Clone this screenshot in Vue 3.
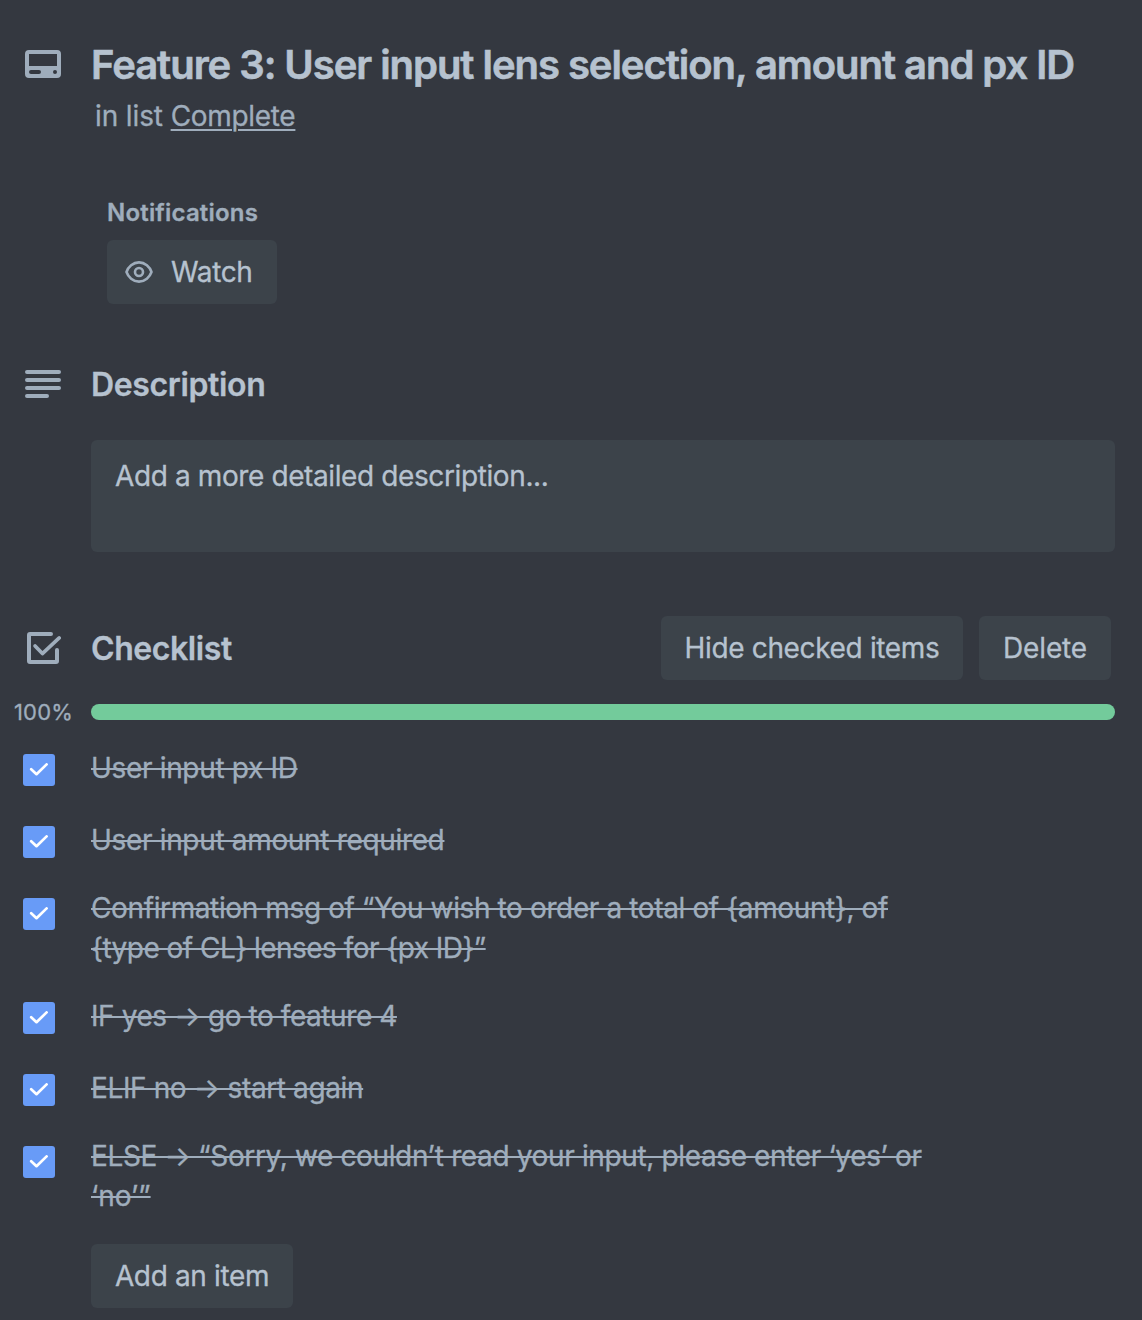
<script setup>
const items = [
  { lines: [{ text: 'User input px ID', spacing: '-0.33px' }] },
  { lines: [{ text: 'User input amount required', spacing: '-0.33px' }] },
  {
    lines: [
      { text: 'Confirmation msg of “You wish to order a total of {amount}, of', spacing: '-0.38px' },
      { text: '{type of CL} lenses for {px ID}”', spacing: '-0.53px' },
    ],
  },
  { lines: [{ text: 'IF yes → go to feature 4', spacing: '-0.42px' }] },
  { lines: [{ text: 'ELIF no → start again', spacing: '-0.38px' }] },
  {
    lines: [
      { text: 'ELSE → “Sorry, we couldn’t read your input, please enter ‘yes’ or', spacing: '-0.365px' },
      { text: '‘no’”', spacing: '0px' },
    ],
  },
]
</script>

<template>
  <main class="card">
    <header class="row head">
      <svg class="icon head-icon" width="36" height="28" viewBox="0 0 36 28">
        <path fill="currentColor" fill-rule="evenodd" d="M4 0h28a4 4 0 0 1 4 4v20a4 4 0 0 1-4 4H4a4 4 0 0 1-4-4V4a4 4 0 0 1 4-4Zm0 4v12h28V4H4Zm2 16a2 2 0 0 0 0 4h8a2 2 0 0 0 0-4H6Zm24 0a2 2 0 1 0 0 4 2 2 0 0 0 0-4Z" />
      </svg>
      <div>
        <h1><span class="t-title">Feature 3: User input lens selection, amount and px ID</span></h1>
        <p class="sub"><span class="t-sub">in list </span><a class="t-complete">Complete</a></p>
      </div>
    </header>

    <section class="notifications">
      <h3><span class="t-notif">Notifications</span></h3>
      <button class="btn watch">
        <svg width="28" height="22" viewBox="0 0 28 22" fill="none" stroke="currentColor" stroke-width="2.6">
          <path d="M1.5 11C3.2 6 8 1.4 14 1.4S24.800 6 26.500 11C24.800 16 20 20.600 14 20.600S3.200 16 1.500 11Z" stroke-linejoin="round" />
          <circle cx="14" cy="11" r="4" />
        </svg>
        <span class="t-watch">Watch</span>
      </button>
    </section>

    <section class="row description">
      <svg class="icon" width="36" height="28" viewBox="0 0 36 28" stroke="currentColor" stroke-width="4" stroke-linecap="round">
        <path d="M2 2h32M2 10h32M2 18h32M2 26h20" />
      </svg>
      <h2><span class="t-desc">Description</span></h2>
    </section>
    <div class="desc-box"><span class="t-box">Add a more detailed description...</span></div>

    <section class="row checklist">
      <svg class="icon check-icon" width="36" height="32" viewBox="0 0 36 32" fill="none" stroke="currentColor" stroke-width="4" stroke-linecap="round" stroke-linejoin="round">
        <path d="M26 2H5a1 1 0 0 0-1 1v26a1 1 0 0 0 1 1h26a1 1 0 0 0 1-1V18" />
        <path d="M10.100 13.900l7.300 7.700L34.200 5.900" stroke-width="3.600" />
      </svg>
      <h2><span class="t-check">Checklist</span></h2>
      <div class="actions">
        <button class="btn hide"><span class="t-hide">Hide checked items</span></button>
        <button class="btn delete"><span class="t-delete">Delete</span></button>
      </div>
    </section>

    <div class="progress">
      <span class="percent"><span class="t-pct">100%</span></span>
      <div class="track"></div>
    </div>

    <ul class="items">
      <li v-for="(item, i) in items" :key="i">
        <span class="box">
          <svg width="20" height="14" viewBox="0 0 20 14" fill="none" stroke="#fff" stroke-width="2.7" stroke-linecap="round" stroke-linejoin="round">
            <path d="M2.200 6.200 7.500 11.200 17.600 1.400" />
          </svg>
        </span>
        <div class="label">
          <div v-for="line in item.lines" :key="line.text">
            <s :style="{ letterSpacing: line.spacing }">{{ line.text }}</s>
          </div>
        </div>
      </li>
    </ul>

    <button class="btn add"><span class="t-add">Add an item</span></button>
  </main>
</template>

<style>
body {
  background: #343840;
}
</style>

<style scoped>
.card {
  box-sizing: border-box;
  width: 1142px;
  height: 1320px;
  padding: 40px 27px 0 0;
  display: flex;
  flex-direction: column;
  overflow: hidden;
  background: #343840;
  color: #b6c2cf;
  font-family: Inter, "Liberation Sans", sans-serif;
  font-size: 28px;
  line-height: 40px;
  white-space: nowrap;
  -webkit-text-stroke: 0.3px currentColor;
}
h1, h2, h3, p, ul { margin: 0; padding: 0; }
h1 { font-size: 40px; line-height: 50px; font-weight: 600; -webkit-text-stroke-width: 0.6px; }
h2 { font-size: 32px; line-height: 40px; font-weight: 600; padding-top: 2px; }
h3 { font-size: 24px; line-height: 32px; font-weight: 600; color: #9fadbc; padding-top: 1px; }
.t-title { letter-spacing: -1.045px; }
.t-sub { letter-spacing: -0.12px; }
.t-complete { letter-spacing: -0.31px; }
.t-notif { letter-spacing: 0.19px; }
.t-watch { letter-spacing: -0.35px; }
.t-desc { letter-spacing: -0.36px; }
.t-box { letter-spacing: -0.39px; }
.t-check { letter-spacing: -0.42px; }
.t-hide { letter-spacing: -0.35px; }
.t-delete { letter-spacing: -0.15px; }
.t-pct { letter-spacing: 0.15px; }
.t-add { letter-spacing: -0.36px; }
.row { display: flex; padding-left: 25px; }
.icon { width: 36px; flex: none; margin-right: 30px; color: #9fadbc; }
.head { height: 156px; }
.head-icon { margin-top: 10px; }
.sub { margin: 6px 0 0 4px; color: #9fadbc; white-space: pre; }
.sub a { text-decoration: underline; text-decoration-thickness: 2px; text-underline-offset: 3px; }
.notifications { margin-left: 107px; height: 168px; }
.btn, .sub, h3, .percent, .label { -webkit-text-stroke-color: currentColor; }
.btn {
  display: flex;
  align-items: center;
  justify-content: center;
  height: 64px;
  padding: 0;
  border: 0;
  border-radius: 6px;
  background: #3c434a;
  color: #b6c2cf;
  font: inherit;
}
.watch { width: 170px; margin-top: 11px; justify-content: flex-start; padding-left: 18px; }
.watch svg { margin-right: 18px; color: #9fadbc; }
.description { align-items: center; height: 40px; }
.desc-box {
  box-sizing: border-box;
  margin: 36px 0 0 91px;
  height: 112px;
  padding: 16px 24px;
  border-radius: 6px;
  background: #3c434a;
}
.checklist { align-items: center; height: 64px; margin-top: 64px; }
.actions { display: flex; gap: 16px; margin: 0 4px 0 auto; }
.hide { width: 302px; }
.delete { width: 132px; }
.progress { display: flex; align-items: center; height: 16px; margin-top: 24px; }
.percent { width: 77px; padding-left: 14px; font-size: 22px; color: #9fadbc; }
.track { flex: 1; height: 16px; border-radius: 8px; background: #73cb9b; }
.items { display: flex; flex-direction: column; gap: 24px; margin-top: 24px; list-style: none; }
.items li { display: flex; min-height: 48px; padding-left: 23px; }
.box {
  display: flex;
  align-items: center;
  justify-content: center;
  width: 32px;
  height: 32px;
  margin: 10px 36px 0 0;
  border-radius: 3px;
  background: #689bf7;
}
.label { align-self: center; color: #9fadbc; }
.label s { text-decoration-thickness: 2px; }
.add { width: 202px; margin: 28px 0 0 91px; flex: none; }
</style>
